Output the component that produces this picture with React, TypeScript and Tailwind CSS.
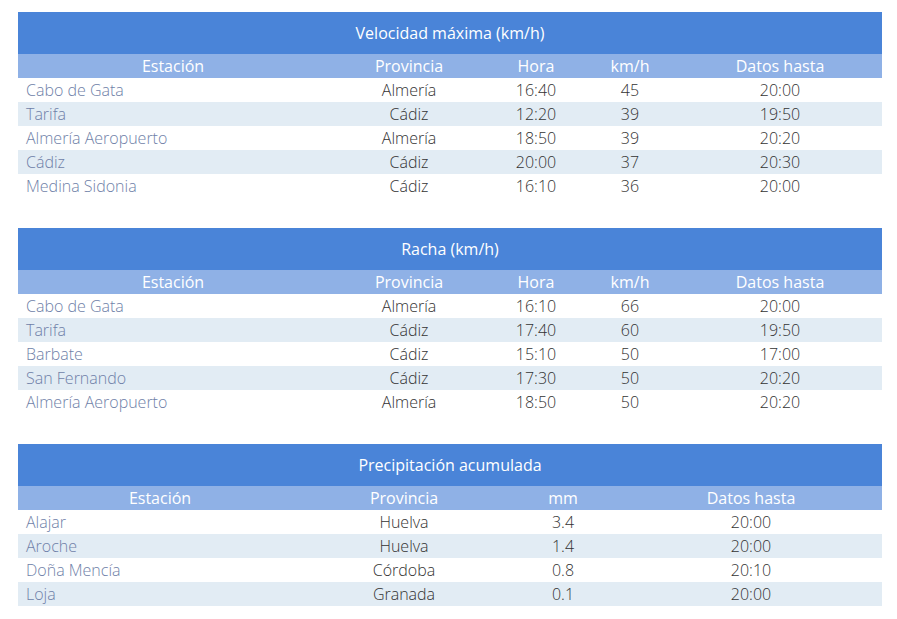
import React from "react";

type Col = { label: string; w: string };

const Table = ({ title, cols, rows }: { title: string; cols: Col[]; rows: string[][] }) => (
  <div className="w-[864px]">
    <div className="h-[42px] bg-[#4a84d8] text-white flex items-center justify-center text-[16px]">{title}</div>
    <div className="flex h-[24px] bg-[#8fb1e6] text-white text-[16px] leading-[24px]">
      {cols.map((c) => (
        <div key={c.label} className={`${c.w} text-center`}>{c.label}</div>
      ))}
    </div>
    {rows.map((r, i) => (
      <div key={i} className={`flex h-[24px] leading-[24px] text-[16px] font-light ${i % 2 === 1 ? "bg-[#e2ecf4]" : "bg-white"}`}>
        {r.map((v, j) => (
          <div
            key={j}
            className={`${cols[j].w} ${j === 0 ? "text-left pl-2 text-[#6f7fa8]" : "text-center text-[#333]"}`}
          >
            {v}
          </div>
        ))}
      </div>
    ))}
  </div>
);

const cols5: Col[] = [
  { label: "Estación", w: "w-[310px]" },
  { label: "Provincia", w: "w-[162px]" },
  { label: "Hora", w: "w-[92px]" },
  { label: "km/h", w: "w-[96px]" },
  { label: "Datos hasta", w: "w-[204px]" },
];

const cols4: Col[] = [
  { label: "Estación", w: "w-[284px]" },
  { label: "Provincia", w: "w-[204px]" },
  { label: "mm", w: "w-[114px]" },
  { label: "Datos hasta", w: "w-[262px]" },
];

export default function App() {
  return (
    <div className="w-[897px] h-[619px] bg-white pl-[18px] pt-[12px] flex flex-col gap-[30px]" style={{ fontFamily: '"Open Sans", sans-serif' }}>
      <Table
        title="Velocidad máxima (km/h)"
        cols={cols5}
        rows={[
          ["Cabo de Gata", "Almería", "16:40", "45", "20:00"],
          ["Tarifa", "Cádiz", "12:20", "39", "19:50"],
          ["Almería Aeropuerto", "Almería", "18:50", "39", "20:20"],
          ["Cádiz", "Cádiz", "20:00", "37", "20:30"],
          ["Medina Sidonia", "Cádiz", "16:10", "36", "20:00"],
        ]}
      />
      <Table
        title="Racha (km/h)"
        cols={cols5}
        rows={[
          ["Cabo de Gata", "Almería", "16:10", "66", "20:00"],
          ["Tarifa", "Cádiz", "17:40", "60", "19:50"],
          ["Barbate", "Cádiz", "15:10", "50", "17:00"],
          ["San Fernando", "Cádiz", "17:30", "50", "20:20"],
          ["Almería Aeropuerto", "Almería", "18:50", "50", "20:20"],
        ]}
      />
      <Table
        title="Precipitación acumulada"
        cols={cols4}
        rows={[
          ["Alajar", "Huelva", "3.4", "20:00"],
          ["Aroche", "Huelva", "1.4", "20:00"],
          ["Doña Mencía", "Córdoba", "0.8", "20:10"],
          ["Loja", "Granada", "0.1", "20:00"],
        ]}
      />
    </div>
  );
}
